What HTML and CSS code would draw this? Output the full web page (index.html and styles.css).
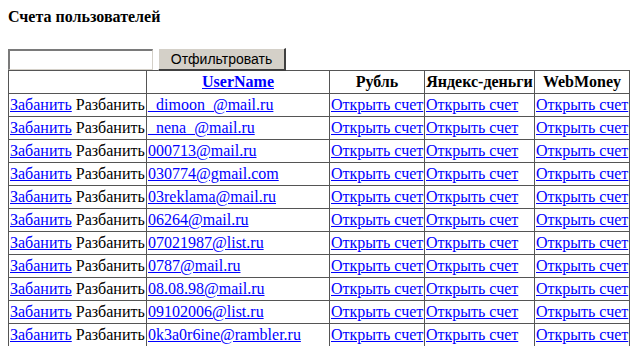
FILE: index.html
```html
<!DOCTYPE html>
<html>
<head>
<meta charset="utf-8">
<link rel="stylesheet" href="styles.css">
</head>
<body>
<div class="title">Счета пользователей</div>
<form class="filter">
<input class="filter-input" type="text"><button class="filter-btn" type="button">Отфильтровать</button>
</form>
<table class="users">
<colgroup>
<col class="c1"><col class="c2"><col class="c3"><col class="c4"><col class="c5">
</colgroup>
<thead>
<tr><th></th><th><a href="#">UserName</a></th><th>Рубль</th><th>Яндекс-деньги</th><th>WebMoney</th></tr>
</thead>
<tbody>
<tr><td><a href="#">Забанить</a> Разбанить</td><td><a href="#">_dimoon_@mail.ru</a></td><td><a href="#">Открыть счет</a></td><td><a href="#">Открыть счет</a></td><td><a href="#">Открыть счет</a></td></tr>
<tr><td><a href="#">Забанить</a> Разбанить</td><td><a href="#">_nena_@mail.ru</a></td><td><a href="#">Открыть счет</a></td><td><a href="#">Открыть счет</a></td><td><a href="#">Открыть счет</a></td></tr>
<tr><td><a href="#">Забанить</a> Разбанить</td><td><a href="#">000713@mail.ru</a></td><td><a href="#">Открыть счет</a></td><td><a href="#">Открыть счет</a></td><td><a href="#">Открыть счет</a></td></tr>
<tr><td><a href="#">Забанить</a> Разбанить</td><td><a href="#">030774@gmail.com</a></td><td><a href="#">Открыть счет</a></td><td><a href="#">Открыть счет</a></td><td><a href="#">Открыть счет</a></td></tr>
<tr><td><a href="#">Забанить</a> Разбанить</td><td><a href="#">03reklama@mail.ru</a></td><td><a href="#">Открыть счет</a></td><td><a href="#">Открыть счет</a></td><td><a href="#">Открыть счет</a></td></tr>
<tr><td><a href="#">Забанить</a> Разбанить</td><td><a href="#">06264@mail.ru</a></td><td><a href="#">Открыть счет</a></td><td><a href="#">Открыть счет</a></td><td><a href="#">Открыть счет</a></td></tr>
<tr><td><a href="#">Забанить</a> Разбанить</td><td><a href="#">07021987@list.ru</a></td><td><a href="#">Открыть счет</a></td><td><a href="#">Открыть счет</a></td><td><a href="#">Открыть счет</a></td></tr>
<tr><td><a href="#">Забанить</a> Разбанить</td><td><a href="#">0787@mail.ru</a></td><td><a href="#">Открыть счет</a></td><td><a href="#">Открыть счет</a></td><td><a href="#">Открыть счет</a></td></tr>
<tr><td><a href="#">Забанить</a> Разбанить</td><td><a href="#">08.08.98@mail.ru</a></td><td><a href="#">Открыть счет</a></td><td><a href="#">Открыть счет</a></td><td><a href="#">Открыть счет</a></td></tr>
<tr><td><a href="#">Забанить</a> Разбанить</td><td><a href="#">09102006@list.ru</a></td><td><a href="#">Открыть счет</a></td><td><a href="#">Открыть счет</a></td><td><a href="#">Открыть счет</a></td></tr>
<tr><td><a href="#">Забанить</a> Разбанить</td><td><a href="#">0k3a0r6ine@rambler.ru</a></td><td><a href="#">Открыть счет</a></td><td><a href="#">Открыть счет</a></td><td><a href="#">Открыть счет</a></td></tr>
</tbody>
</table>
</body>
</html>
```
FILE: styles.css
```css
html, body {
  background: #ffffff;
}
body {
  margin: 8px;
  font-family: "Liberation Serif", "Times New Roman", serif;
  font-size: 16px;
  color: #000;
}
.title {
  font-weight: bold;
  line-height: 18px;
  height: 40px;
}
.filter {
  margin: 0;
  display: flex;
  align-items: center;
  height: 22px;
}
.filter-input {
  box-sizing: border-box;
  width: 145px;
  height: 21px;
  margin: 0 5px 0 0;
  padding: 1px 2px;
  border-style: solid;
  border-width: 2px 1px 1px 2px;
  border-color: #7a7a7a #d4d0c8 #d4d0c8 #7a7a7a;
  background: #fff;
  font-family: "Liberation Sans", Arial, sans-serif;
  font-size: 13px;
}
.filter-btn {
  box-sizing: border-box;
  width: 128px;
  height: 23px;
  margin: 0;
  padding: 0;
  background: #d4d0c8;
  border-style: solid;
  border-width: 1px 2px 2px 1px;
  border-color: #ffffff #404040 #404040 #ffffff;
  font-family: "Liberation Sans", Arial, sans-serif;
  font-size: 14px;
  color: #000;
}
.users {
  border-collapse: collapse;
  table-layout: fixed;
  width: 621px;
}
.c1 { width: 138px; }
.c2 { width: 183px; }
.c3 { width: 95px; }
.c4 { width: 110px; }
.c5 { width: 95px; }
.users th,
.users td {
  border: 1px solid #555555;
  padding: 1px;
  line-height: 20px;
  white-space: nowrap;
  overflow: hidden;
}
.users th {
  font-weight: bold;
  text-align: center;
}
.users td {
  text-align: left;
}
.users a {
  color: #0000ff;
  text-decoration: underline;
}
```
